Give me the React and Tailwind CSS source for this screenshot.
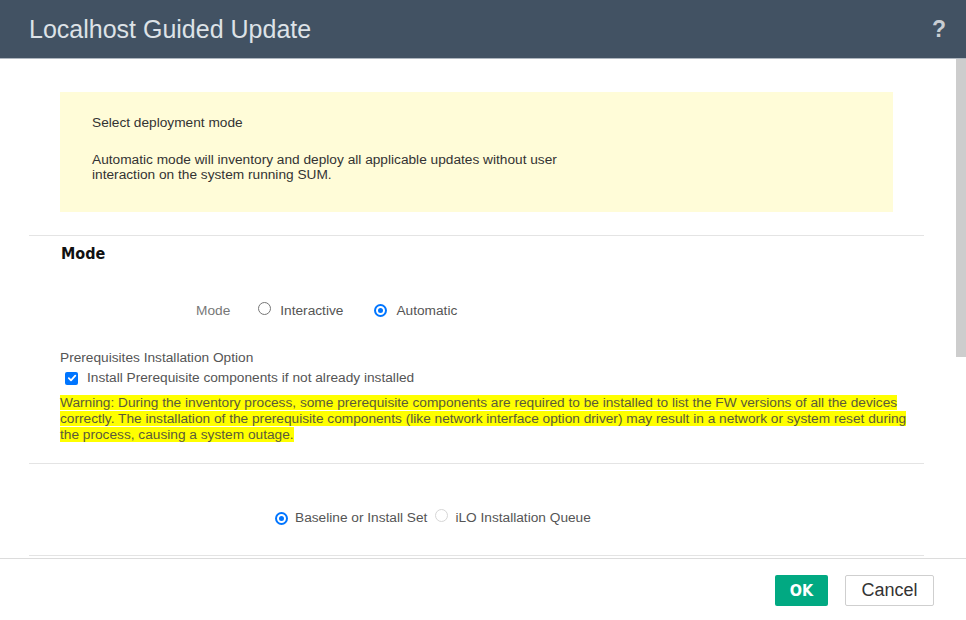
import React from "react";

const sans = { fontFamily: '"Liberation Sans", Arial, sans-serif' };

function Radio({ checked, disabled }) {
  if (checked) {
    return (
      <span className="inline-flex h-[13px] w-[13px] shrink-0 items-center justify-center rounded-full bg-[#0075ff]">
        <span className="h-[9px] w-[9px] rounded-full border-[2px] border-white bg-[#0075ff]" />
      </span>
    );
  }
  return (
    <span
      className={
        "inline-block h-[13px] w-[13px] shrink-0 rounded-full border bg-white " +
        (disabled ? "border-[#d6d6d6]" : "border-[#767676]")
      }
    />
  );
}

function Checkbox() {
  return (
    <span className="inline-flex h-[13px] w-[13px] shrink-0 items-center justify-center rounded-[2px] bg-[#0075ff]">
      <svg width="10" height="10" viewBox="0 0 10 10">
        <path d="M1.8 5.2 L4 7.3 L8.3 2.6" fill="none" stroke="white" strokeWidth="1.8" strokeLinecap="round" strokeLinejoin="round" />
      </svg>
    </span>
  );
}

export default function App() {
  return (
    <div className="flex h-[620px] w-[966px] flex-col overflow-hidden bg-white" style={sans}>
      {/* Header */}
      <div className="flex h-[59px] shrink-0 items-center justify-between border-b border-[#aeb6bf] bg-[#425263] pl-[29px] pr-[20px]">
        <div className="text-[25px] leading-none text-[#dde2e7]">Localhost Guided Update</div>
        <div className="text-[23px] font-bold leading-none text-[#c9ced3]">?</div>
      </div>

      {/* Body */}
      <div className="flex min-h-0 flex-1">
        <div className="flex-1 pl-[29px] pr-[32px]">
          <div className="mx-[31px] mt-[33px] h-[120px] bg-[#fffcd8] pl-[32px] pt-[23px] text-[13.7px] leading-[15px] text-[#333]">
            <div>Select deployment mode</div>
            <div className="mt-[22px]">
              Automatic mode will inventory and deploy all applicable updates without user
              <br />
              interaction on the system running SUM.
            </div>
          </div>

          <div className="mt-[23px] h-[1px] bg-[#e4e4e4]" />

          <div
            className="ml-[32px] mt-[6px] text-[16px] font-bold leading-[24px] text-[#111]"
            style={{ fontFamily: '"DejaVu Sans Condensed", "DejaVu Sans", sans-serif', fontStretch: "condensed" }}
          >
            Mode
          </div>

          <div className="ml-[167px] mt-[35px] flex h-[20px] items-center text-[13.7px] text-[#555]">
            <span className="text-[#777]">Mode</span>
            <span className="ml-[28px]"><Radio /></span>
            <span className="ml-[9px]">Interactive</span>
            <span className="ml-[31px]"><Radio checked /></span>
            <span className="ml-[9px]">Automatic</span>
          </div>

          <div className="ml-[31px] mt-[27px] text-[13.7px] leading-[20px] text-[#555]">
            Prerequisites Installation Option
          </div>
          <div className="ml-[36px] flex h-[20px] items-center text-[13.7px] text-[#555]">
            <Checkbox />
            <span className="ml-[9px]">Install Prerequisite components if not already installed</span>
          </div>

          <div className="ml-[31px] mt-[7px] text-[13.7px] leading-[16px] text-[#5b5b3a]">
            <span className="bg-[#ffff00]">
              Warning: During the inventory process, some prerequisite components are required to be installed to list the FW versions of all the devices
            </span>
            <br />
            <span className="bg-[#ffff00]">
              correctly. The installation of the prerequisite components (like network interface option driver) may result in a network or system reset during
            </span>
            <br />
            <span className="bg-[#ffff00]">the process, causing a system outage.</span>
          </div>

          <div className="mt-[20px] h-[1px] bg-[#e4e4e4]" />

          <div className="ml-[246px] mt-[44px] flex h-[20px] items-center text-[13.7px] text-[#555]">
            <Radio checked />
            <span className="ml-[7px]">Baseline or Install Set</span>
            <span className="ml-[8px]"><Radio disabled /></span>
            <span className="ml-[7px]">iLO Installation Queue</span>
          </div>

          <div className="mt-[27px] h-[1px] bg-[#e4e4e4]" />
        </div>

        {/* Scrollbar */}
        <div className="w-[10px] shrink-0 bg-white">
          <div className="h-[298px] bg-[#cdcdcd]" />
        </div>
      </div>

      {/* Footer */}
      <div className="flex h-[62px] shrink-0 items-start justify-end border-t border-[#dcdcdc] pr-[32px] pt-[16px]">
        <button
          className="flex h-[31px] w-[53px] items-center justify-center rounded-[2px] bg-[#01a982] text-[16px] font-bold text-white"
          style={{ fontFamily: '"DejaVu Sans Condensed", "DejaVu Sans", sans-serif', fontStretch: "condensed" }}
        >
          OK
        </button>
        <button className="ml-[17px] flex h-[31px] w-[89px] items-center justify-center rounded-[2px] border border-[#cfcfcf] bg-white text-[18px] text-[#333]">
          Cancel
        </button>
      </div>
    </div>
  );
}
